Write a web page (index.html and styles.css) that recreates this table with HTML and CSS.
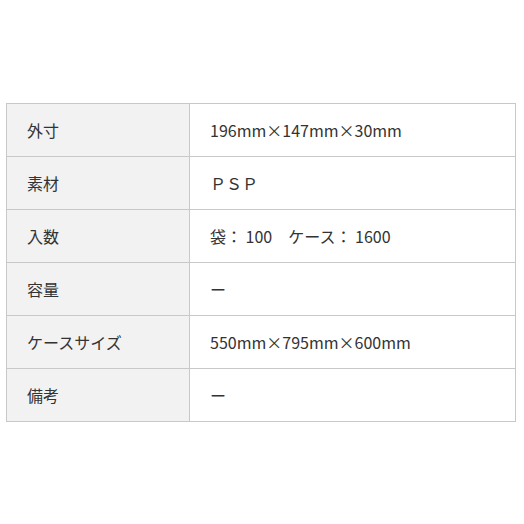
FILE: index.html
```html
<!DOCTYPE html>
<html lang="ja">
<head>
<meta charset="utf-8">
<link rel="stylesheet" href="styles.css">
</head>
<body>
<div class="wrap">
<table class="spec">
<tr><th>外寸</th><td>196mm×147mm×30mm</td></tr>
<tr><th>素材</th><td>ＰＳＰ</td></tr>
<tr><th>入数</th><td>袋： 100　ケース： 1600</td></tr>
<tr><th>容量</th><td>ー</td></tr>
<tr><th>ケースサイズ</th><td>550mm×795mm×600mm</td></tr>
<tr><th>備考</th><td>ー</td></tr>
</table>
</div>
</body>
</html>
```
FILE: styles.css
```css
html, body { margin: 0; padding: 0; background: #fff; }
.wrap { padding: 103px 8px 0 6px; }
.spec {
  width: 510px;
  border-collapse: collapse;
  font-family: "Noto Sans CJK JP", "Noto Sans", sans-serif;
  font-size: 16px;
  color: #333;
}
.spec th, .spec td {
  border: 1px solid #c8c8c8;
  height: 53px;
  padding: 0 0 0 20px;
  text-align: left;
  font-weight: normal;
  box-sizing: border-box;
}
.spec th { width: 183px; background: #f2f2f2; }
.spec td { background: #fff; }
```
